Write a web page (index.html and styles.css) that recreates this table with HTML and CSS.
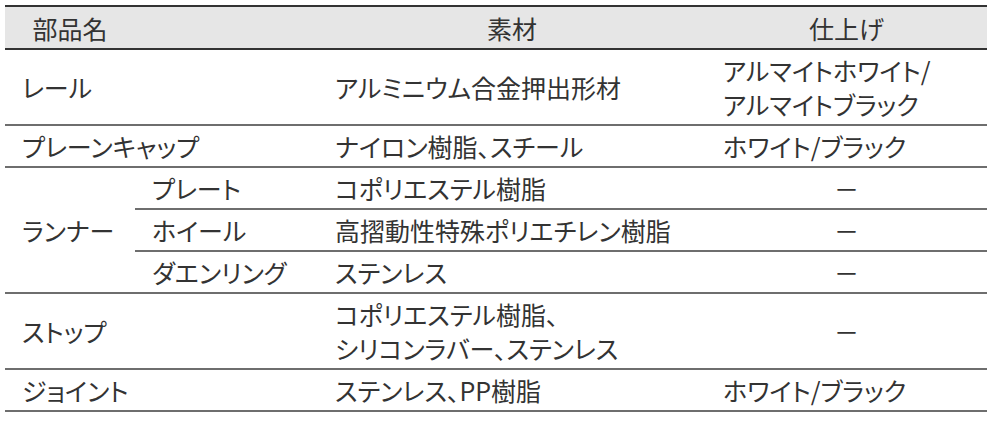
FILE: index.html
```html
<!DOCTYPE html>
<html lang="ja">
<head>
<meta charset="utf-8">
<link rel="stylesheet" href="styles.css">
</head>
<body>
<table class="spec">
  <colgroup>
    <col class="c1"><col class="c2"><col class="c3"><col class="c4">
  </colgroup>
  <thead>
    <tr>
      <th class="h-name">部品名</th>
      <th></th>
      <th class="center">素材</th>
      <th class="center">仕上げ</th>
    </tr>
  </thead>
  <tbody>
    <tr>
      <td colspan="2">レール</td>
      <td>アルミニウム合金押出形材</td>
      <td>アルマイトホワイト/<br>アルマイトブラック</td>
    </tr>
    <tr>
      <td colspan="2">プレーンキャップ</td>
      <td>ナイロン樹脂、スチール</td>
      <td>ホワイト/ブラック</td>
    </tr>
    <tr class="sub">
      <td rowspan="3" class="group">ランナー</td>
      <td>プレート</td>
      <td>コポリエステル樹脂</td>
      <td class="center">－</td>
    </tr>
    <tr class="sub">
      <td>ホイール</td>
      <td>高摺動性特殊ポリエチレン樹脂</td>
      <td class="center">－</td>
    </tr>
    <tr>
      <td>ダエンリング</td>
      <td>ステンレス</td>
      <td class="center">－</td>
    </tr>
    <tr>
      <td colspan="2">ストップ</td>
      <td>コポリエステル樹脂、<br>シリコンラバー、ステンレス</td>
      <td class="center">－</td>
    </tr>
    <tr>
      <td colspan="2">ジョイント</td>
      <td>ステンレス、PP樹脂</td>
      <td>ホワイト/ブラック</td>
    </tr>
  </tbody>
</table>
</body>
</html>
```

FILE: styles.css
```css
html, body {
  margin: 0;
  padding: 0;
  background: #ffffff;
}

body {
  padding: 5px 0 0 5px;
  font-family: "Noto Sans CJK JP", "Noto Sans", sans-serif;
  color: #333333;
}

.spec {
  width: 982px;
  table-layout: fixed;
  border-collapse: collapse;
  font-size: 25px;
  line-height: 34px;
  font-feature-settings: "palt";
}

.c1 { width: 130px; }
.c2 { width: 183px; }
.c3 { width: 388px; }
.c4 { width: 281px; }

.spec th {
  background: #e6e6e6;
  font-weight: 400;
  text-align: left;
  padding: 4px 17px 3px;
  border-top: 2px solid #333333;
  border-bottom: 2px solid #333333;
}

.spec th.h-name {
  text-align: center;
  padding-left: 0;
  padding-right: 0;
}

.spec td {
  padding: 3px 17px;
  text-align: left;
  vertical-align: middle;
  border-bottom: 2px solid #6e6e6e;
  white-space: nowrap;
}

.spec .center {
  text-align: center;
  padding-left: 0;
  padding-right: 0;
}

.spec td.group {
  padding-right: 0;
}
```
